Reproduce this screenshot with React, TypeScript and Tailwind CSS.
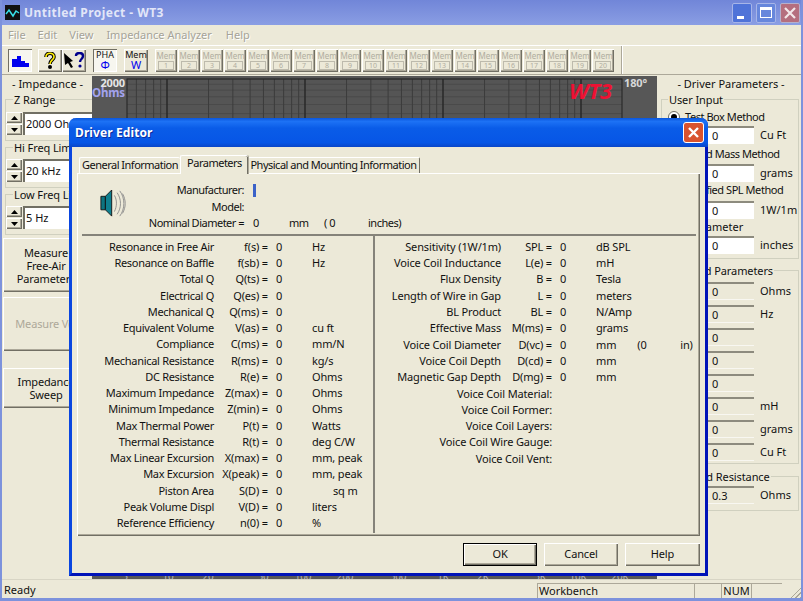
import type { ReactNode } from 'react'

const raised = 'bg-[#ece9d8] shadow-[inset_1px_1px_0_#ffffff,inset_-1px_-1px_0_#716f64,inset_-2px_-2px_0_#aca899]'

const leftRows: [string, string, string, boolean?][] = [
  ['Resonance in Free Air', 'f(s) =', 'Hz'],
  ['Resonance on Baffle', 'f(sb) =', 'Hz'],
  ['Total Q', 'Q(ts) =', ''],
  ['Electrical Q', 'Q(es) =', ''],
  ['Mechanical Q', 'Q(ms) =', ''],
  ['Equivalent Volume', 'V(as) =', 'cu ft'],
  ['Compliance', 'C(ms) =', 'mm/N'],
  ['Mechanical Resistance', 'R(ms) =', 'kg/s'],
  ['DC Resistance', 'R(e) =', 'Ohms'],
  ['Maximum Impedance', 'Z(max) =', 'Ohms'],
  ['Minimum Impedance', 'Z(min) =', 'Ohms'],
  ['Max Thermal Power', 'P(t) =', 'Watts'],
  ['Thermal Resistance', 'R(t) =', 'deg C/W'],
  ['Max Linear Excursion', 'X(max) =', 'mm, peak'],
  ['Max Excursion', 'X(peak) =', 'mm, peak'],
  ['Piston Area', 'S(D) =', 'sq m', true],
  ['Peak Volume Displ', 'V(D) =', 'liters'],
  ['Reference Efficiency', 'n(0) =', '%'],
]

const rightRows: [string, string, string][] = [
  ['Sensitivity (1W/1m)', 'SPL =', 'dB SPL'],
  ['Voice Coil Inductance', 'L(e) =', 'mH'],
  ['Flux Density', 'B =', 'Tesla'],
  ['Length of Wire in Gap', 'L =', 'meters'],
  ['BL Product', 'BL =', 'N/Amp'],
  ['Effective Mass', 'M(ms) =', 'grams'],
  ['Voice Coil Diameter', 'D(vc) =', 'mm'],
  ['Voice Coil Depth', 'D(cd) =', 'mm'],
  ['Magnetic Gap Depth', 'D(mg) =', 'mm'],
]

const rightLabels = ['Voice Coil Material:', 'Voice Coil Former:', 'Voice Coil Layers:', 'Voice Coil Wire Gauge:', 'Voice Coil Vent:']

const memNumbers = Array.from({ length: 20 }, (_, i) => i + 1)

function ToolButton({ pressed, children, className = '' }: { pressed?: boolean; children: ReactNode; className?: string }) {
  return (
    <div
      className={`flex h-[23px] w-[24px] shrink-0 flex-col items-center justify-center ${
        pressed ? 'bg-[#f7f6ef] shadow-[inset_1px_1px_0_#716f64,inset_-1px_-1px_0_#ffffff]' : raised
      } ${className}`}
    >
      {children}
    </div>
  )
}

function MemButton({ n }: { n: number }) {
  return (
    <div className={`flex h-[23px] w-[22px] shrink-0 flex-col items-center pt-[2px] text-[8px] leading-[9px] tracking-normal text-[#b0ad9f] ${raised}`}>
      <span>Mem</span>
      <span className="mt-[1px] h-[9px] w-[16px] border border-[#bdbaac] text-center text-[7px] leading-[7px]">{n}</span>
    </div>
  )
}

function Spinner({ value }: { value: string }) {
  return (
    <div className="flex h-[23px] items-stretch">
      <div className="flex w-[16px] shrink-0 flex-col">
        <div className={`flex h-[11px] items-center justify-center ${raised}`}>
          <svg width="7" height="4" viewBox="0 0 7 4"><path d="M3.5 0L7 4H0z" fill="#000" /></svg>
        </div>
        <div className={`mt-[1px] flex h-[11px] items-center justify-center ${raised}`}>
          <svg width="7" height="4" viewBox="0 0 7 4"><path d="M3.5 4L7 0H0z" fill="#000" /></svg>
        </div>
      </div>
      <div className="ml-[1px] w-[70px] shrink-0 overflow-hidden whitespace-nowrap border-t-2 border-l-2 border-t-[#716f64] border-l-[#716f64] bg-white pl-[1px] leading-[20px] tracking-normal">
        {value}
      </div>
    </div>
  )
}

function Group({ label, className = '', legendClass = 'ml-[7px]', children }: { label: string; className?: string; legendClass?: string; children: ReactNode }) {
  return (
    <fieldset className={`border border-[#d0d0bf] ${className}`}>
      <legend className={`whitespace-nowrap px-[1px] leading-[13px] tracking-[-0.1px] ${legendClass}`}>{label}</legend>
      {children}
    </fieldset>
  )
}

function ParamInput({ value, unit, editable, className = '' }: { value: string; unit?: string; editable?: boolean; className?: string }) {
  return (
    <div className={`flex h-[18px] items-center ${className}`}>
      <div
        className={`ml-[38px] h-[18px] w-[54px] border-t-2 border-t-[#8d8b7e] pl-[12px] leading-[15px] ${
          editable ? 'bg-white' : 'border-b border-b-[#f8f7f1]'
        }`}
      >
        {value}
      </div>
      <span className="ml-[6px] whitespace-nowrap">{unit}</span>
    </div>
  )
}

function LeftPanel() {
  return (
    <div className="flex w-[90px] shrink-0 flex-col">
      <div className="mt-[2px] pl-[1px] text-center leading-[14px] tracking-normal">- Impedance -</div>
      <Group label="Z Range" className="mt-[2px] ml-[3px] h-[48px] w-[83px] overflow-hidden pt-[6px]">
        <Spinner value="2000 Ohms" />
      </Group>
      <Group label="Hi Freq Limit" className="ml-[3px] h-[47px] w-[83px] overflow-hidden pt-[5px]">
        <Spinner value="20 kHz" />
      </Group>
      <Group label="Low Freq Limit" className="ml-[3px] h-[47px] w-[83px] overflow-hidden pt-[5px]">
        <Spinner value="5 Hz" />
      </Group>
      <div className={`mt-[3px] ml-[1px] flex h-[54px] w-[86px] flex-col items-center justify-center text-center leading-[13px] ${raised}`}>
        <span>Measure</span>
        <span>Free-Air</span>
        <span>Parameters</span>
      </div>
      <div className={`mt-[5px] ml-[1px] flex h-[54px] w-[86px] items-center justify-center whitespace-nowrap pl-[9px] text-[#aca899] ${raised}`}>
        Measure V(as)
      </div>
      <div className={`mt-[17px] ml-[1px] flex h-[40px] w-[86px] flex-col items-center justify-center text-center leading-[13px] ${raised}`}>
        <span>Impedance</span>
        <span>Sweep</span>
      </div>
    </div>
  )
}

function Chart() {
  const plotL = 35
  const plotR = 530
  const decades = [-63, 75, 213, 351, 489]
  const vLines: number[] = []
  decades.forEach((d) => {
    for (let n = 1; n <= 9; n++) {
      const x = d + 138 * Math.log10(n)
      if (x > plotL && x < plotR) vLines.push(x)
    }
  })
  const hLines = [10, 9, 8, 7, 6, 5, 4, 3, 2].map((n) => 3 + 115 * (1 - Math.log10(n)))
  const ticks: [number, string][] = [
    [33, '5'], [76, '10'], [116, '20'], [171, '50'], [211, '100'], [253, '200'], [306, '500'],
    [351, '1K'], [391, '2K'], [448, '5K'], [486, '10K'], [528, '20K'],
  ]
  return (
    <div className="mt-[1px] h-[503px] w-[565px] shrink-0 bg-[#575757]">
      <svg width="565" height="503" viewBox="0 0 565 503" className="block">
        <rect x={plotL} y="3" width={plotR - plotL} height="488" fill="#555555" />
        {hLines.map((y) => (
          <line key={y} x1={plotL} x2={plotR} y1={y} y2={y} stroke="#4a4a4a" strokeWidth="1" />
        ))}
        {vLines.map((x) => (
          <line key={x} x1={x} x2={x} y1="3" y2="491" stroke="#3c3c3c" strokeWidth="1" />
        ))}
        {decades.slice(1).map((d) => (
          <line key={d} x1={d} x2={d} y1="3" y2="491" stroke="#1f1f1f" strokeWidth="1" />
        ))}
        <rect x={plotL} y="3" width={plotR - plotL} height="488" fill="none" stroke="#222222" />
        <text x="33" y="11" textAnchor="end" fontSize="11" fontWeight="700" fill="#e6e6e6">2000</text>
        <text x="33" y="21" textAnchor="end" fontSize="11.5" fontWeight="700" fill="#a3a3ee">Ohms</text>
        <text x="532" y="11" fontSize="11" fontWeight="700" fill="#d8d8d8">180°</text>
        <text x="477" y="23" fontSize="22" fontWeight="700" fontStyle="italic" fill="#ee1133">WT3</text>
        {ticks.map(([x, t]) => (
          <text key={t} x={x} y="504" textAnchor="middle" fontSize="10" fill="#b8b8b8">{t}</text>
        ))}
      </svg>
    </div>
  )
}

function RightPanel() {
  return (
    <div className="flex w-[144px] shrink-0 flex-col pl-[4px] pr-[2px] tracking-normal">
      <div className="mt-[2px] pl-[2px] text-center leading-[14px]">- Driver Parameters -</div>
      <Group label="User Input" className="mt-[2px] h-[166px] pt-[4px]" legendClass="ml-[6px]">
        <div className="flex h-[14px] items-center pl-[6px] leading-[14px] tracking-[-0.45px]">
          <span className="mr-[5px] flex size-[12px] items-center justify-center rounded-full border border-[#716f64] bg-white">
            <span className="size-[6px] rounded-full bg-black" />
          </span>
          Test Box Method
        </div>
        <ParamInput value="0" unit="Cu Ft" editable className="mt-[2px]" />
        <div className="mt-[3px] pl-[19px] leading-[14px] tracking-[-0.45px]">Added Mass Method</div>
        <ParamInput value="0" unit="grams" editable className="mt-[3px]" />
        <div className="mt-[1px] pl-[19px] leading-[14px] tracking-[-0.45px]">Specified SPL Method</div>
        <ParamInput value="0" unit="1W/1m" editable className="mt-[4px]" />
        <div className="mt-[1px] pl-[33px] leading-[14px]">Diameter</div>
        <ParamInput value="0" unit="inches" editable className="mt-[2px]" />
      </Group>
      <Group label="Derived Parameters" className="mt-[5px] h-[200px] pt-[5px]" legendClass="ml-[9px]">
        <div className="flex flex-col gap-[5px]">
          <ParamInput value="0" unit="Ohms" />
          <ParamInput value="0" unit="Hz" />
          <ParamInput value="0" />
          <ParamInput value="0" />
          <ParamInput value="0" />
          <ParamInput value="0" unit="mH" />
          <ParamInput value="0" unit="grams" />
          <ParamInput value="0" unit="Cu Ft" />
        </div>
      </Group>
      <Group label="Added Resistance" className="mt-[6px] h-[41px] pt-[3px]" legendClass="ml-[17px]">
        <ParamInput value="0.3" unit="Ohms" />
      </Group>
    </div>
  )
}

function Toolbar() {
  return (
    <div className="flex h-[30px] shrink-0 items-center border-t border-b border-t-white border-b-[#aca899] pl-[6px]">
      <ToolButton pressed className="mr-[6px]">
        <svg width="17" height="14" viewBox="0 0 17 14"><path d="M0 14V6h5V3h4v5h4v2h4v4z" fill="#0000ee" /></svg>
      </ToolButton>
      <ToolButton>
        <svg width="14" height="17" viewBox="0 0 14 17" fill="none">
          <path d="M3 5c0-5 8-5 8 0 0 3-4 3-4 7" stroke="#000" strokeWidth="3.6" />
          <circle cx="7" cy="15" r="2" fill="#000" />
          <path d="M3 5c0-5 8-5 8 0 0 3-4 3-4 7" stroke="#ffee00" strokeWidth="1.6" />
        </svg>
      </ToolButton>
      <ToolButton className="mr-[7px]">
        <svg width="22" height="17" viewBox="0 0 22 17" fill="none">
          <path d="M1 1l9 8-3 1 3 5-2 1-3-5-3 2z" fill="#000" />
          <path d="M13 4c0-4 7-4 7 0 0 3-3 3-3 6" stroke="#00008b" strokeWidth="2.4" />
          <circle cx="17" cy="14" r="1.6" fill="#00008b" />
        </svg>
      </ToolButton>
      <ToolButton pressed className="mr-[7px]">
        <span className="text-[9px] leading-[10px] tracking-normal">PHA</span>
        <span className="text-[11px] leading-[10px] text-[#0000ee]">Φ</span>
      </ToolButton>
      <ToolButton className="mr-[7px]">
        <span className="text-[9px] leading-[10px] tracking-normal">Mem</span>
        <span className="text-[11px] leading-[10px] text-[#0000ee]">W</span>
      </ToolButton>
      <div className="flex gap-[1px]">
        {memNumbers.map((n) => (
          <MemButton key={n} n={n} />
        ))}
      </div>
      <div className="ml-[7px] h-[28px] border-l border-l-[#aca899] shadow-[1px_0_0_#fff]" />
    </div>
  )
}

function ParamRow({ label, sym, unit, shift, labelW, symW, track = '' }: { label: string; sym: string; unit: string; shift?: boolean; labelW: string; symW: string; track?: string }) {
  return (
    <div className="flex h-[16.25px] items-center whitespace-nowrap">
      <span className={`${labelW} shrink-0 text-right ${track}`}>{label}</span>
      <span className={`${symW} shrink-0 text-right`}>{sym}</span>
      <span className="ml-[8px] w-[36px] shrink-0">0</span>
      <span className={shift ? 'ml-[21px]' : ''}>{unit}</span>
    </div>
  )
}

function DriverEditor() {
  return (
    <div className="absolute top-[118px] left-[67px] flex h-[458px] w-[639px] flex-col rounded-t-[7px] border-x-[3px] border-b-[3px] border-l-[#0a46e0] border-r-[#0013b8] border-b-[#0013b8] bg-[#ece9d8]">
      <div className="-mx-[3px] flex h-[29px] shrink-0 items-center justify-between rounded-t-[7px] bg-[linear-gradient(#0a55dc,#1d72f5_12%,#0a5ce8_35%,#0756e6_85%,#0a46c8)] pr-[4px] pl-[6px]">
        <span className="text-[12px] font-bold tracking-[0.1px] text-white [text-shadow:1px_1px_0_#0a2fa0]">Driver Editor</span>
        <span className="flex size-[21px] items-center justify-center rounded-[3px] border border-white bg-[#d9532f]">
          <svg width="13" height="13" viewBox="0 0 13 13"><path d="M2 2l9 9M11 2l-9 9" stroke="#fff" strokeWidth="2.4" /></svg>
        </span>
      </div>
      <div className="flex flex-col px-[5px]">
        <div className="mt-[8px] flex h-[18px] items-end whitespace-nowrap pl-[2px] tracking-[-0.5px]">
          <div className="flex h-[16px] w-[101px] items-center justify-center rounded-t-[2px] border-t border-l border-[#fff] bg-[#ece9d8]">General Information</div>
          <div className="z-10 -mb-px flex h-[19px] w-[68px] items-center justify-center rounded-t-[2px] border-t border-l border-[#fff] bg-[#ece9d8] pb-[3px] shadow-[inset_-1px_0_0_#716f64,1px_0_0_#aca899]">Parameters</div>
          <div className="flex h-[16px] w-[172px] items-center justify-center rounded-t-[2px] border-t border-r border-t-white border-r-[#716f64] bg-[#ece9d8]">Physical and Mounting Information</div>
        </div>
        <div className="h-[363px] w-[623px] border-t border-l border-t-white border-l-white px-[4px] shadow-[inset_-1px_-1px_0_#716f64,inset_-2px_-2px_0_#aca899]">
          <div className="flex h-[62px] border-b-2 border-b-[#85837a]">
            <svg width="27" height="31" viewBox="0 0 30 34" fill="none" className="mt-[14px] ml-[18px] w-[27px] shrink-0">
              <path d="M1 9h5v15H1z" fill="#0e7480" stroke="#111" />
              <path d="M6 9l7-7v29l-7-7z" fill="#0e8090" stroke="#111" />
              <path d="M16 8c3 5 3 12 0 18M19 5c5 7 5 17 0 24M22 3c6 8 6 20 0 28M25 6c4 7 4 15 0 22" stroke="#8a8a8a" />
            </svg>
            <div className="flex flex-col pt-[8px] tracking-[-0.5px]">
              <div className="flex h-[16.5px] items-center">
                <span className="ml-[2px] w-[115px] text-right">Manufacturer:</span>
                <span className="ml-[9px] h-[13px] w-[3px] bg-[#3b62c8]" />
              </div>
              <div className="ml-[2px] h-[16px] w-[115px] text-right leading-[16px]">Model:</div>
              <div className="flex h-[16.5px] items-center whitespace-nowrap">
                <span className="ml-[2px] w-[115px] text-right">Nominal Diameter =</span>
                <span className="ml-[9px] w-[36px]">0</span>
                <span className="w-[35px]">mm</span>
                <span className="w-[44px]">( 0</span>
                <span>inches)</span>
              </div>
            </div>
          </div>
          <div className="flex h-[297px] items-start">
            <div className="h-[297px] w-[293px] shrink-0 border-r-2 border-r-[#85837a] pt-[3px]">
              {leftRows.map(([label, sym, unit, shift]) => (
                <ParamRow key={label} label={label} sym={sym} unit={unit} shift={shift} labelW="w-[132px]" symW="w-[54px]" track="tracking-[-0.3px]" />
              ))}
            </div>
            <div className="pt-[3px]">
              {rightRows.map(([label, sym, unit]) => (
                <div key={label} className="flex items-center">
                  <ParamRow label={label} sym={sym} unit={unit} labelW="w-[126px]" symW="w-[51px]" />
                  {label === 'Voice Coil Diameter' && (
                    <>
                      <span className="ml-[21px] w-[43px]">(0</span>
                      <span>in)</span>
                    </>
                  )}
                </div>
              ))}
              {rightLabels.map((label) => (
                <div key={label} className="h-[16.25px] w-[177px] whitespace-nowrap text-right leading-[16.25px]">{label}</div>
              ))}
            </div>
          </div>
        </div>
        <div className="mt-[7px] flex gap-[7px] self-end">
          <div className={`flex h-[23px] w-[74px] items-center justify-center border border-black ${raised}`}>OK</div>
          <div className={`flex h-[23px] w-[74px] items-center justify-center ${raised}`}>Cancel</div>
          <div className={`flex h-[23px] w-[75px] items-center justify-center ${raised}`}>Help</div>
        </div>
      </div>
    </div>
  )
}

export default function App() {
  return (
    <div className="relative flex h-[601px] w-[803px] flex-col overflow-hidden border-x-2 border-b-[3px] border-x-[#7d92dc] border-b-[#7d92dc] bg-[#ece9d8] font-['Liberation_Sans',Arial,sans-serif] text-[11px] tracking-[-0.15px] text-[#111]">
      <div className="-mx-[2px] flex h-[25px] shrink-0 items-center bg-[linear-gradient(#7186d8,#8094df_60%,#8a9ee4)] pr-[3px] pl-[5px]">
        <svg width="15" height="15" viewBox="0 0 15 15" className="shrink-0">
          <rect width="15" height="15" fill="#111" />
          <path d="M1 9l3-4 4 6 3-5 3 2" fill="none" stroke="#38e0e8" strokeWidth="1.5" />
        </svg>
        <span className="ml-[4px] text-[12px] font-bold tracking-[0.45px] text-[#e2e6f8]">Untitled Project - WT3</span>
        <div className="ml-auto flex gap-[4px]">
          <span className="flex h-[20px] w-[20px] items-end rounded-[2px] border border-[#a7b5e8] bg-[#4f73d8] pb-[3px] pl-[4px]">
            <span className="h-[3px] w-[7px] bg-white" />
          </span>
          <span className="flex h-[20px] w-[20px] items-center justify-center rounded-[2px] border border-[#a7b5e8] bg-[#6787dc]">
            <span className="h-[11px] w-[12px] border border-t-[3px] border-white" />
          </span>
          <span className="flex h-[20px] w-[20px] items-center justify-center rounded-[2px] border border-[#b5b0cc] bg-[#b56e7e]">
            <svg width="12" height="12" viewBox="0 0 12 12"><path d="M1 1l10 10M11 1L1 11" stroke="#f3e6e8" strokeWidth="2.2" /></svg>
          </span>
        </div>
      </div>
      <div className="flex h-[20px] shrink-0 items-center pl-[6px] text-[#a5a398] tracking-normal [text-shadow:1px_1px_0_#fff]">
        <span className="mr-[12px]">File</span>
        <span className="mr-[12px]">Edit</span>
        <span className="mr-[13px]">View</span>
        <span className="mr-[14px]">Impedance Analyzer</span>
        <span>Help</span>
      </div>
      <Toolbar />
      <div className="flex min-h-0 flex-1">
        <LeftPanel />
        <Chart />
        <RightPanel />
      </div>
      <div className="flex h-[19px] shrink-0 items-end border-t border-t-[#d8d5c5] tracking-normal">
        <span className="min-w-0 flex-1 self-end pb-[1px] pl-[2px] leading-[14px]">Ready</span>
        <span className="h-[15px] w-[157px] border-l border-t border-l-[#aca899] border-t-[#aca899] pl-[1px] leading-[14px]">Workbench</span>
        <span className="h-[15px] w-[27px] border-l border-t border-l-[#aca899] border-t-[#aca899]" />
        <span className="h-[15px] w-[31px] border-x border-t border-[#aca899] text-center leading-[14px]">NUM</span>
        <span className="h-[15px] w-[30px] border-t border-t-[#aca899]" />
        <span className="flex w-[19px] justify-end">
          <span className="h-[13px] w-[13px] bg-[repeating-linear-gradient(135deg,transparent_0,transparent_2px,#aca899_2px,#aca899_3px)] [clip-path:polygon(100%_0,100%_100%,0_100%)]" />
        </span>
      </div>
      <DriverEditor />
    </div>
  )
}
